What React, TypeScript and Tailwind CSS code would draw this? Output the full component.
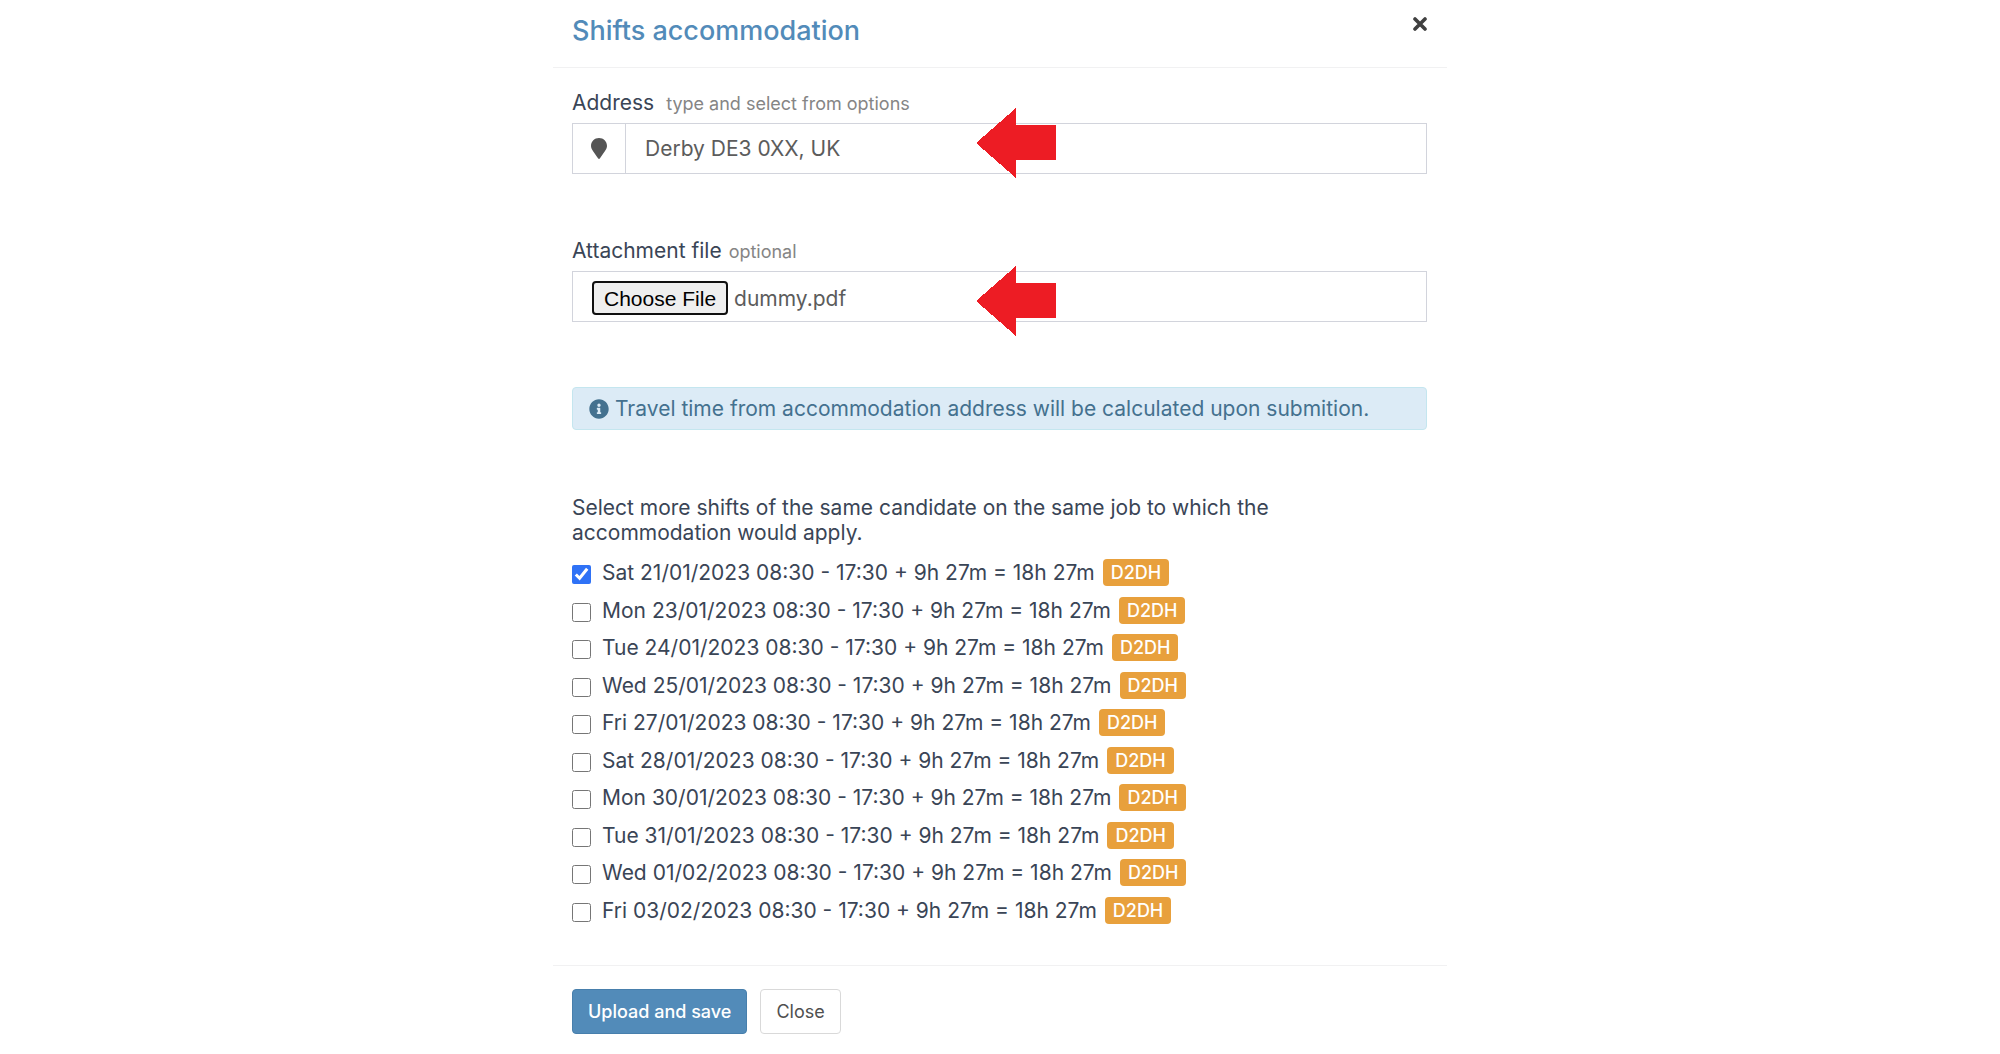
import { useRef, useState } from "react";
import { FaInfoCircle } from "react-icons/fa";

const SHIFTS = [
  "Sat 21/01/2023 08:30 - 17:30 + 9h 27m = 18h 27m",
  "Mon 23/01/2023 08:30 - 17:30 + 9h 27m = 18h 27m",
  "Tue 24/01/2023 08:30 - 17:30 + 9h 27m = 18h 27m",
  "Wed 25/01/2023 08:30 - 17:30 + 9h 27m = 18h 27m",
  "Fri 27/01/2023 08:30 - 17:30 + 9h 27m = 18h 27m",
  "Sat 28/01/2023 08:30 - 17:30 + 9h 27m = 18h 27m",
  "Mon 30/01/2023 08:30 - 17:30 + 9h 27m = 18h 27m",
  "Tue 31/01/2023 08:30 - 17:30 + 9h 27m = 18h 27m",
  "Wed 01/02/2023 08:30 - 17:30 + 9h 27m = 18h 27m",
  "Fri 03/02/2023 08:30 - 17:30 + 9h 27m = 18h 27m",
];

function Arrow({ className }: { className: string }) {
  return (
    <svg
      aria-hidden="true"
      viewBox="0 0 80 70"
      shapeRendering="crispEdges"
      className={`pointer-events-none absolute left-[403px] h-[70px] w-20 ${className}`}
    >
      <path d="M0 35 L40 0 V17 H80 V52 H40 V70 Z" fill="#ed1c24" />
    </svg>
  );
}

function ShiftRow({ label, index }: { label: string; index: number }) {
  const [checked, setChecked] = useState(index === 0);
  const id = `shift-${index}`;

  return (
    <li className="flex h-[37px] items-center even:h-[38px]">
      <input
        id={id}
        type="checkbox"
        checked={checked}
        onChange={(e) => setChecked(e.target.checked)}
        className="mt-1 size-[19px] shrink-0 accent-[#2f72f6]"
      />
      <label htmlFor={id} className="flex items-center gap-2 pl-[11px]">
        <span>{label}</span>
        <span className="rounded-[4px] bg-[#e8a03c] px-2 text-lg leading-[27px] font-medium text-white">
          D2DH
        </span>
      </label>
    </li>
  );
}

export default function App() {
  const fileRef = useRef<HTMLInputElement>(null);
  const [address, setAddress] = useState("Derby DE3 0XX, UK");
  const [fileName, setFileName] = useState("dummy.pdf");

  return (
    <div className="min-h-screen bg-white font-['Inter',sans-serif] text-[21px] leading-[25px] text-[#3a4556]">
      <form
        className="mx-auto w-full max-w-[894px]"
        onSubmit={(e) => e.preventDefault()}
      >
        <header className="flex items-start justify-between border-b border-[#f1f1f2] pt-[13px] pr-5 pb-[18px] pl-[19px]">
          <h1 className="text-[27px] leading-9 font-medium text-[#528bb9]">
            Shifts accommodation
          </h1>
          <button type="button" aria-label="Close dialog" className="mt-1">
            <svg viewBox="0 0 14 14" className="size-[14px]" fill="none">
              <path
                d="M2 2 L12 12 M12 2 L2 12"
                stroke="#404040"
                strokeWidth="3.6"
                strokeLinecap="round"
              />
            </svg>
          </button>
        </header>

        <div className="pt-[22px] pr-5 pb-9 pl-[19px]">
          <div className="flex items-baseline gap-3">
            <label htmlFor="address">Address</label>
            <small className="text-lg leading-[25px] text-[#858585]">
              type and select from options
            </small>
          </div>
          <div className="relative mt-[7px] flex h-[51px] border border-[#d2d4dc]">
            <span className="flex w-[53px] shrink-0 items-center justify-center border-r border-[#d2d4dc]">
              <svg viewBox="0 0 16 21" className="h-[21px] w-4" fill="#555555">
                <path d="M8 0 C12.5 0 16 3.5 16 8 C16 11.5 12.2 15.2 9 20.2 Q8 21.6 7 20.2 C3.8 15.2 0 11.5 0 8 C0 3.5 3.5 0 8 0 Z" />
              </svg>
            </span>
            <input
              id="address"
              type="text"
              value={address}
              onChange={(e) => setAddress(e.target.value)}
              className="min-w-0 flex-1 px-[19px] text-[#5c5c5c] outline-none"
            />
            <Arrow className="-top-4" />
          </div>

          <div className="mt-16 flex items-baseline gap-[7px]">
            <label htmlFor="attachment">Attachment file</label>
            <small className="text-lg leading-[25px] text-[#858585]">
              optional
            </small>
          </div>
          <div className="relative mt-[7px] flex h-[51px] items-center gap-[6px] border border-[#d2d4dc] px-[19px] pt-[3px]">
            <input
              id="attachment"
              ref={fileRef}
              type="file"
              tabIndex={-1}
              className="sr-only"
              onChange={(e) => setFileName(e.target.files?.[0]?.name ?? "")}
            />
            <button
              type="button"
              onClick={() => fileRef.current?.click()}
              className="h-[34px] rounded-[4px] border-2 border-[#101010] bg-[#efefef] px-[10px] font-['Liberation_Sans',Arial,sans-serif] text-black"
            >
              Choose File
            </button>
            <span className="text-[#5c5c5c]">{fileName}</span>
            <Arrow className="-top-[6px]" />
          </div>

          <div
            role="alert"
            className="mt-[65px] flex items-center gap-[6px] rounded-[4px] border border-[#c4e6ef] bg-[#dcebf6] px-4 py-2 text-[#44718f]"
          >
            <FaInfoCircle className="size-5 shrink-0" />
            <span>
              Travel time from accommodation address will be calculated upon
              submition.
            </span>
          </div>

          <fieldset className="mt-[65px]">
            <legend className="max-w-[720px]">
              Select more shifts of the same candidate on the same job to which
              the accommodation would apply.
            </legend>
            <ul className="pt-[9px]">
              {SHIFTS.map((shift, i) => (
                <ShiftRow key={shift} label={shift} index={i} />
              ))}
            </ul>
          </fieldset>
        </div>

        <footer className="flex gap-[13px] border-t border-[#f1f1f2] pt-[23px] pr-5 pb-5 pl-[19px] text-lg">
          <button
            type="submit"
            className="h-[45px] rounded-[4px] border border-[#477fac] bg-[#528bb9] px-[15px] font-medium text-white"
          >
            Upload and save
          </button>
          <button
            type="button"
            className="h-[45px] rounded-[4px] border border-[#d9d9d9] bg-white px-[15px] text-[#505050]"
          >
            Close
          </button>
        </footer>
      </form>
    </div>
  );
}
